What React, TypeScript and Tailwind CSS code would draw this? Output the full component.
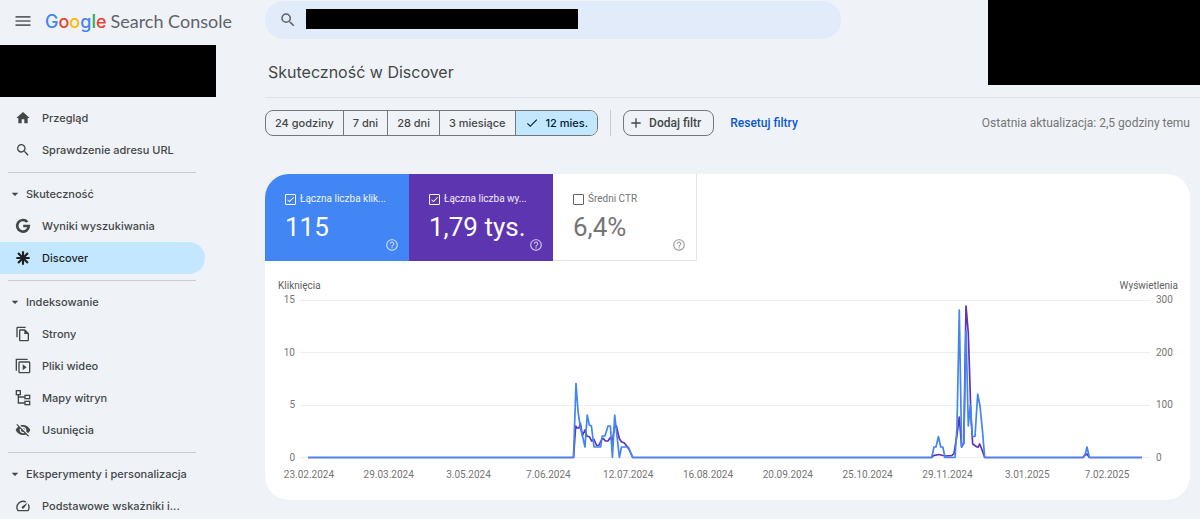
import type { ReactNode } from "react";
import {
  MdAdd,
  MdArrowDropDown,
  MdCheck,
  MdHelpOutline,
  MdHome,
  MdMenu,
  MdOutlineFileCopy,
  MdOutlineSpeed,
  MdSearch,
  MdVisibilityOff,
} from "react-icons/md";

type NavItem = {
  label: string;
  icon: ReactNode;
  active?: boolean;
};

type NavSection = {
  title: string;
  items: NavItem[];
};

type Metric = {
  id: string;
  label: string;
  value: string;
  checked: boolean;
  className: string;
  labelClassName: string;
  boxClassName: string;
};

function GoogleIcon() {
  return (
    <svg viewBox="0 0 24 24" className="size-4" fill="none" stroke="currentColor" strokeWidth="4">
      <path d="M18.6 6A8.7 8.7 0 1 0 20.7 12H12.3" />
    </svg>
  );
}

function DiscoverIcon() {
  return (
    <svg viewBox="0 0 24 24" className="size-4" stroke="currentColor" strokeWidth="3.2">
      <path d="M12 2v20M2 12h20M4.6 4.6l14.8 14.8M19.4 4.6L4.6 19.4" />
    </svg>
  );
}

function VideoPagesIcon() {
  return (
    <svg viewBox="0 0 24 24" className="size-4" fill="none" stroke="currentColor" strokeWidth="2">
      <path d="M2 19V2h17" />
      <rect x="6" y="6" width="16" height="16" rx="1" />
      <path d="M11.5 9.5v9l6-4.5z" fill="currentColor" stroke="none" />
    </svg>
  );
}

function SitemapIcon() {
  return (
    <svg viewBox="0 0 24 24" className="size-4" fill="none" stroke="currentColor" strokeWidth="2">
      <rect x="2" y="1" width="6" height="6" />
      <rect x="15" y="8" width="7" height="5" />
      <rect x="15" y="17" width="7" height="5" />
      <path d="M5 7v12.5h10M5 10.5h10" />
    </svg>
  );
}

const mainItems: NavItem[] = [
  { label: "Przegląd", icon: <MdHome size={16} /> },
  { label: "Sprawdzenie adresu URL", icon: <MdSearch size={16} /> },
];

const sections: NavSection[] = [
  {
    title: "Skuteczność",
    items: [
      { label: "Wyniki wyszukiwania", icon: <GoogleIcon /> },
      { label: "Discover", icon: <DiscoverIcon />, active: true },
    ],
  },
  {
    title: "Indeksowanie",
    items: [
      { label: "Strony", icon: <MdOutlineFileCopy size={16} /> },
      { label: "Pliki wideo", icon: <VideoPagesIcon /> },
      { label: "Mapy witryn", icon: <SitemapIcon /> },
      { label: "Usunięcia", icon: <MdVisibilityOff size={16} /> },
    ],
  },
  {
    title: "Eksperymenty i personalizacja",
    items: [{ label: "Podstawowe wskaźniki i...", icon: <MdOutlineSpeed size={16} /> }],
  },
];

const ranges = ["24 godziny", "7 dni", "28 dni", "3 miesiące", "12 mies."];

const metrics: Metric[] = [
  {
    id: "klikniecia",
    label: "Łączna liczba klik...",
    value: "115",
    checked: true,
    className: "bg-[#4285f4] text-white",
    labelClassName: "text-white/90",
    boxClassName: "border-white",
  },
  {
    id: "wyswietlenia",
    label: "Łączna liczba wy...",
    value: "1,79 tys.",
    checked: true,
    className: "bg-[#5e35b1] text-white",
    labelClassName: "text-white/90",
    boxClassName: "border-white",
  },
  {
    id: "ctr",
    label: "Średni CTR",
    value: "6,4%",
    checked: false,
    className: "border-r border-b border-[#e4e6e9] bg-white text-[#757575]",
    labelClassName: "text-[#757575]",
    boxClassName: "border-[#616161]",
  },
];

const dates = [
  "23.02.2024",
  "29.03.2024",
  "3.05.2024",
  "7.06.2024",
  "12.07.2024",
  "16.08.2024",
  "20.09.2024",
  "25.10.2024",
  "29.11.2024",
  "3.01.2025",
  "7.02.2025",
];

const clicksLine =
  "8,157.5 273.5,157.5 276,83.5 278.2,113 280.5,128 282.5,136 285,147 287.2,115 289.3,125 291.4,126 294,147 300.7,147 302.2,136 305,136 308,126 310.4,126 312.4,157.5 314.7,115 317,136 319.4,157.5 321.5,147 328.3,147 332.7,157.5 631.7,157.5 634,147 636,147 638.4,136.5 640.7,147 642.8,147 645,157.5 655,157.5 657,127 659.3,10 661.6,147 663.8,143 666,31 668.3,126 670.3,105 672.4,136.5 675,136.5 677.7,94 680,106 682.4,130 684.7,157.5 783,157.5 785.3,154 787,147 789.4,157.5 842,157.5";

const impressionsLine =
  "8,157.5 273.5,157.5 275.7,126 277,128 279,128 280.4,123.5 282.4,135.5 285,130 286.8,136 289.3,136.7 291.7,141 294,139.5 296.7,145.5 298.8,145.5 301.7,139.5 303.4,138.5 305.4,141 308,141 310.4,137.5 312.5,141 314.5,127 316.4,126 319.3,138.5 321.4,141.7 324,142.7 326.8,146 329.4,150 332.7,157.5 631.7,157.5 633.4,155.7 639,154.5 645,156 651.7,155.7 654,153.5 657,135 659.3,117 661.6,147 663.8,143 666,6 668.3,33 671,117 672.7,144 676.7,146.7 678,147.3 679.7,144 681.7,149 684.7,157.5 783,157.5 785.3,155 787,154 789.4,157.5 842,157.5";

function NavLink({ item }: { item: NavItem }) {
  return (
    <li>
      <a
        href="#"
        aria-current={item.active ? "page" : undefined}
        className={`mr-[60px] flex h-8 items-center gap-[11px] rounded-r-full pl-[15px] ${
          item.active ? "bg-[#c2e7ff] text-[#1f1f1f]" : "text-[#444746]"
        }`}
      >
        {item.icon}
        <span className="truncate">{item.label}</span>
      </a>
    </li>
  );
}

function Sidebar() {
  return (
    <aside className="w-[265px] shrink-0">
      <div className="flex h-[45px] items-center gap-3 pb-[3px] pl-[13px]">
        <button type="button" aria-label="Menu" className="text-[#5f6368]">
          <MdMenu size={20} />
        </button>
        <a href="#" className="flex items-baseline gap-1 text-[#5f6368]">
          <span className="text-[18px] leading-6 font-medium">
            <span className="text-[#4285f4]">G</span>
            <span className="text-[#ea4335]">o</span>
            <span className="text-[#fbbc04]">o</span>
            <span className="text-[#4285f4]">g</span>
            <span className="text-[#34a853]">l</span>
            <span className="text-[#ea4335]">e</span>
          </span>
          <span className="font-['Lato',sans-serif] text-[18px] leading-6">Search Console</span>
        </a>
      </div>

      <div className="mr-[49px] h-[52px] bg-black" />

      <nav className="pt-[5px] text-[11px] font-medium">
        <ul>
          {mainItems.map((item) => (
            <NavLink key={item.label} item={item} />
          ))}
        </ul>

        {sections.map((section) => (
          <section key={section.title}>
            <hr className="mt-[6px] mr-[69px] mb-[5px] ml-2 border-[#c9ccd1]" />
            <button type="button" className="flex h-8 items-center gap-[3px] pl-[7px] text-[#444746]">
              <MdArrowDropDown size={16} />
              {section.title}
            </button>
            <ul>
              {section.items.map((item) => (
                <NavLink key={item.label} item={item} />
              ))}
            </ul>
          </section>
        ))}
      </nav>
    </aside>
  );
}

function Toolbar() {
  return (
    <div className="flex items-center pt-3 pr-[10px] font-['Roboto',sans-serif] text-[12px] font-medium text-[#444746]">
      <div className="flex h-[26px] overflow-hidden rounded-lg border border-[#747775] font-['Inter',sans-serif] text-[11px]">
        {ranges.map((range) => {
          const selected = range === "12 mies.";

          return (
            <button
              key={range}
              type="button"
              aria-pressed={selected}
              className={`flex items-center gap-[7px] border-l border-[#747775] px-[9px] first:border-l-0 ${
                selected ? "bg-[#c2e7ff] text-[#001d35]" : ""
              }`}
            >
              {selected && <MdCheck size={14} />}
              {range}
            </button>
          );
        })}
      </div>
      <div className="mx-3 h-[26px] w-px bg-[#c9ccd1]" />
      <button
        type="button"
        className="flex h-[26px] items-center gap-[5px] rounded-lg border border-[#747775] pr-3 pl-1"
      >
        <MdAdd size={16} />
        Dodaj filtr
      </button>
      <button type="button" className="ml-4 text-[#0b57d0]">
        Resetuj filtry
      </button>
      <p className="ml-auto font-normal text-[#757575]">Ostatnia aktualizacja: 2,5 godziny temu</p>
    </div>
  );
}

function MetricCard({ metric }: { metric: Metric }) {
  return (
    <div className={`h-[87px] w-36 pt-[18px] pr-[10px] pl-5 ${metric.className}`}>
      <div className="flex items-center gap-1">
        <span className="relative flex size-[11px] shrink-0">
          <input
            id={metric.id}
            type="checkbox"
            defaultChecked={metric.checked}
            className={`peer size-[11px] appearance-none rounded-[1px] border ${metric.boxClassName}`}
          />
          <MdCheck
            size={9}
            className="pointer-events-none absolute top-px left-px hidden peer-checked:block"
          />
        </span>
        <label
          htmlFor={metric.id}
          className={`text-[10px] leading-[14px] whitespace-nowrap ${metric.labelClassName}`}
        >
          {metric.label}
        </label>
      </div>
      <p className="mt-[6px] text-[26px] leading-[30px]">{metric.value}</p>
      <button type="button" aria-label="Pomoc" className="-mt-1 ml-auto block opacity-70">
        <MdHelpOutline size={14} />
      </button>
    </div>
  );
}

function Chart() {
  return (
    <div className="pt-[19px] text-[10px] text-[#757575]">
      <div className="flex justify-between pr-3 pl-[13px] leading-3 text-[#616161]">
        <span>Kliknięcia</span>
        <span>Wyświetlenia</span>
      </div>
      <div className="flex pt-[2px] leading-3">
        <div className="flex h-[170px] w-[30px] flex-col justify-between text-right">
          <span>15</span>
          <span>10</span>
          <span>5</span>
          <span>0</span>
        </div>
        <svg
          viewBox="0 0 850 158"
          preserveAspectRatio="none"
          className="mx-[5px] mt-[6px] h-[158px] min-w-0 flex-1 overflow-visible"
          fill="none"
          role="img"
          aria-label="Kliknięcia i wyświetlenia"
        >
          <path d="M0 .5H850M0 52.5H850M0 105.5H850M0 157.5H850" stroke="#eeeeee" />
          <polyline points={impressionsLine} stroke="#5e35b1" strokeWidth="1.7" strokeLinejoin="round" />
          <polyline points={clicksLine} stroke="#4285f4" strokeWidth="1.7" strokeLinejoin="round" />
        </svg>
        <div className="flex h-[170px] w-[35px] flex-col justify-between pl-px">
          <span>300</span>
          <span>200</span>
          <span>100</span>
          <span>0</span>
        </div>
      </div>
      <div className="grid grid-cols-11 pt-[5px] pr-[43px] pb-[19px] pl-1 text-center leading-3">
        {dates.map((date) => (
          <span key={date}>{date}</span>
        ))}
      </div>
    </div>
  );
}

export default function App() {
  return (
    <div className="flex h-screen overflow-hidden bg-[#eff3f8] font-['Inter',sans-serif]">
      <Sidebar />

      <main className="min-w-0 flex-1">
        <header className="flex items-start justify-between border-b border-[#e0e3e7] pb-3">
          <div className="min-w-0 flex-1 pt-px">
            <div className="flex h-[38px] max-w-[576px] items-center gap-[9px] rounded-full bg-[#e2ebfa] pl-[14px]">
              <MdSearch size={18} className="shrink-0 text-[#5f6368]" />
              <div className="mb-[3px] h-5 w-[272px] bg-black" />
            </div>
            <h1 className="mt-[21px] pl-[3px] text-[16px] leading-6 text-[#444746]">
              Skuteczność w Discover
            </h1>
          </div>
          <div className="h-[85px] w-[212px] shrink-0 bg-black" />
        </header>

        <Toolbar />

        <div className="mt-[38px] mr-[10px] overflow-hidden rounded-3xl bg-white font-['Roboto',sans-serif]">
          <div className="flex">
            {metrics.map((metric) => (
              <MetricCard key={metric.id} metric={metric} />
            ))}
          </div>
          <Chart />
        </div>
      </main>
    </div>
  );
}
